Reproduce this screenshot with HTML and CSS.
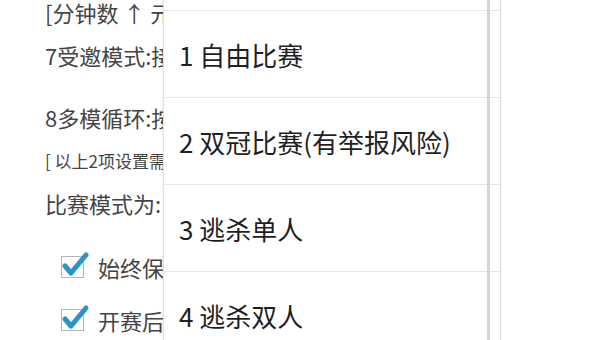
FILE: index.html
```html
<!DOCTYPE html>
<html lang="zh">
  <head>
    <meta charset="UTF-8" />
    <meta name="viewport" content="width=device-width, initial-scale=1.0" />
    <title>比赛模式</title>
    <link rel="stylesheet" href="styles.css">
  </head>
  <body>
    <div class="settings">
      <div class="line l1">[分钟数 ↑ 元素 ↓]</div>
      <div class="line l2">7受邀模式:接受邀请</div>
      <div class="line l3">8多模循环:按顺序循环</div>
      <div class="line note">[ 以上2项设置需要重启生效 ]</div>
      <div class="line l5">比赛模式为:自由比赛</div>
      <label class="check r1">
        <span class="box">
          <svg viewBox="0 0 30 30" width="30" height="30"><path d="M5 16 L11 23 L26 5" /></svg>
        </span>
        <span>始终保持屏幕常亮</span>
      </label>
      <label class="check r2">
        <span class="box">
          <svg viewBox="0 0 30 30" width="30" height="30"><path d="M5 16 L11 23 L26 5" /></svg>
        </span>
        <span>开赛后立即开始</span>
      </label>
    </div>

    <!-- dropdown list shown over the settings -->
    <div class="menu">
      <div class="item"></div>
      <div class="item">1 自由比赛</div>
      <div class="item">2 双冠比赛(有举报风险)</div>
      <div class="item">3 逃杀单人</div>
      <div class="item">4 逃杀双人</div>
    </div>
  </body>
</html>
```

FILE: styles.css
```css
*,
*::before,
*::after {
  box-sizing: border-box;
}

body {
  margin: 0;
  width: 600px;
  height: 340px;
  overflow: hidden;
  background-color: #fff;
  font-family: "Noto Sans CJK SC", "Noto Sans", sans-serif;
  position: relative;
}

/* the settings column is cut where the dropdown starts */
.settings {
  display: flex;
  flex-direction: column;
  width: 164px;
  height: 340px;
  overflow: hidden;
  padding-left: 45px;
  color: #454545;
  font-size: 22px;
}

.line {
  height: 26px;
  line-height: 26px;
  white-space: nowrap;
  flex-shrink: 0;
}

.l1 {
  margin-top: -1px;
}

.l2 {
  margin-top: 17px;
}

.l3 {
  margin-top: 36px;
}

.note {
  font-size: 17px;
  height: 22px;
  line-height: 22px;
  margin-top: 20px;
}

.l5 {
  margin-top: 18px;
}

/* checkboxes */

.check {
  display: flex;
  align-items: center;
  height: 30px;
  padding-left: 16px;
  white-space: nowrap;
  flex-shrink: 0;
}

.r1 {
  margin-top: 36px;
}

.r2 {
  margin-top: 23px;
}

.box {
  width: 23px;
  height: 22px;
  border: 1px solid #b5b5b5;
  position: relative;
  margin-right: 14px;
  flex-shrink: 0;
}

.box svg {
  position: absolute;
  left: -2px;
  top: -7px;
}

.box path {
  fill: none;
  stroke: #2b93c6;
  stroke-width: 5;
  stroke-linecap: round;
  stroke-linejoin: round;
}

/* Dropdown menu */

.menu {
  position: absolute;
  left: 163px;
  top: -77px;
  width: 338px;
  height: 417px;
  overflow: hidden;
  background-color: #fff;
  border-left: 1px solid #e2e2e2;
  border-right: 1px solid #dcdcdc;
  box-shadow: -1px 0 2px rgba(0, 0, 0, 0.06);
}

.menu::after {
  content: "";
  position: absolute;
  top: 0;
  bottom: 0;
  left: 323px;
  width: 3px;
  background-color: #d4d4d4;
}

.item {
  height: 87px;
  border-top: 1px solid #e6e6e6;
  display: flex;
  align-items: center;
  padding-left: 15px;
  font-size: 26px;
  color: #1f1f1f;
  white-space: nowrap;
}

.item:first-child {
  border-top: none;
}
```
